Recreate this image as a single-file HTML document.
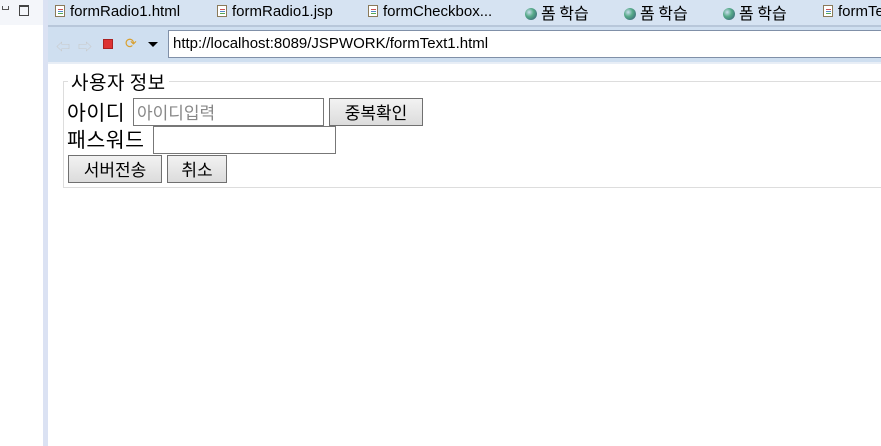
<!DOCTYPE html><html><head><meta charset="utf-8"><style>
body{margin:0;width:881px;height:446px;overflow:hidden;background:#fff;position:relative;font-family:"Liberation Sans","Noto Sans CJK KR",sans-serif}
.a{position:absolute;white-space:nowrap}
.k{font-family:"Noto Sans CJK KR","Liberation Sans",sans-serif}
.doc{display:inline-block;width:10px;height:12px;border:1px solid #8a7a5a;background:#fff;vertical-align:-1px;margin-right:5px;box-sizing:border-box;background-image:linear-gradient(#c55 0 0),linear-gradient(#58c 0 0),linear-gradient(#5a5 0 0);background-size:5px 1px;background-repeat:no-repeat;background-position:2px 3px,2px 5px,2px 7px}
.glb{display:inline-block;width:12px;height:12px;border-radius:50%;background:radial-gradient(circle at 35% 35%,#cde 0,#5a8 40%,#357 100%);vertical-align:-1px;margin-right:4px}
.tab{position:absolute;top:3px;font-size:15px;color:#000;white-space:nowrap}
.btn{position:absolute;background:linear-gradient(#f2f2f2,#dcdcdc);border:1px solid #707070;font-size:16px;text-align:center;box-sizing:border-box;line-height:26px}
.inp{position:absolute;border:1px solid #777;background:#fff;box-sizing:border-box;white-space:nowrap;overflow:hidden}
.lab{position:absolute;font-size:20.5px;white-space:nowrap;letter-spacing:0.5px}
</style></head><body>
<div class="a" style="left:0;top:0;width:43px;height:25px;background:#f4f6fa"></div>
<div class="a" style="left:2px;top:6px;width:5px;height:3px;border:1px solid #555;border-top:none"></div>
<div class="a" style="left:19px;top:5px;width:8px;height:8px;border:1px solid #444;border-top-width:2px"></div>
<div class="a" style="left:43px;top:0;width:5px;height:446px;background:#dbe2f3"></div>
<div class="a" style="left:48px;top:0;width:833px;height:25px;background:#d6e3f2"></div>
<div class="a" style="left:48px;top:25px;width:833px;height:2px;background:#b8c7da"></div>
<div class="a" style="left:48px;top:27px;width:833px;height:35px;background:#cfdff0"></div>
<div class="a" style="left:48px;top:62px;width:833px;height:2px;background:#e8eef6"></div>
<div class="tab" style="left:55px"><span class="doc"></span>formRadio1.html</div>
<div class="tab" style="left:217px"><span class="doc"></span>formRadio1.jsp</div>
<div class="tab" style="left:368px"><span class="doc"></span>formCheckbox...</div>
<div class="tab k" style="left:525px;top:0px;font-size:16px"><span class="glb"></span>폼 학습</div>
<div class="tab k" style="left:624px;top:0px;font-size:16px"><span class="glb"></span>폼 학습</div>
<div class="tab k" style="left:723px;top:0px;font-size:16px"><span class="glb"></span>폼 학습</div>
<div class="tab" style="left:823px"><span class="doc"></span>formTe</div>
<div class="a" style="left:56px;top:37px;color:#c8c8c8;font-size:14px">⇦</div>
<div class="a" style="left:78px;top:37px;color:#c8c8c8;font-size:14px">⇨</div>
<div class="a" style="left:103px;top:39px;width:10px;height:10px;background:#d33;border:1px solid #a22;box-sizing:border-box"></div>
<div class="a" style="left:125px;top:35px;color:#d9a030;font-size:14px">⟳</div>
<div class="a" style="left:148px;top:42px;border:5px solid transparent;border-top:5px solid #000"></div>
<div class="a" style="left:168px;top:30px;width:720px;height:28px;border:1px solid #8090a8;background:#fff;box-sizing:border-box;font-size:15px;line-height:26px;padding-left:4px">http://localhost:8089/JSPWORK/formText1.html</div>
<div class="a" style="left:63px;top:81px;width:830px;height:107px;border:1px solid #ddd;box-sizing:border-box"></div>
<div class="lab k" style="left:68px;top:68px;background:#fff;padding:0 3px;font-size:19px">사용자 정보</div>
<div class="lab k" style="left:67px;top:96px">아이디</div>
<div class="inp k" style="left:133px;top:98px;width:191px;height:28px;font-size:17px;color:#888;padding-left:3px;line-height:25px">아이디입력</div>
<div class="btn k" style="left:329px;top:98px;width:94px;height:28px;font-size:17px">중복확인</div>
<div class="lab k" style="left:67px;top:123px">패스워드</div>
<div class="inp" style="left:153px;top:126px;width:183px;height:28px"></div>
<div class="btn k" style="left:68px;top:155px;width:94px;height:28px;font-size:17px">서버전송</div>
<div class="btn k" style="left:167px;top:155px;width:60px;height:28px;font-size:17px">취소</div>
</body></html>
